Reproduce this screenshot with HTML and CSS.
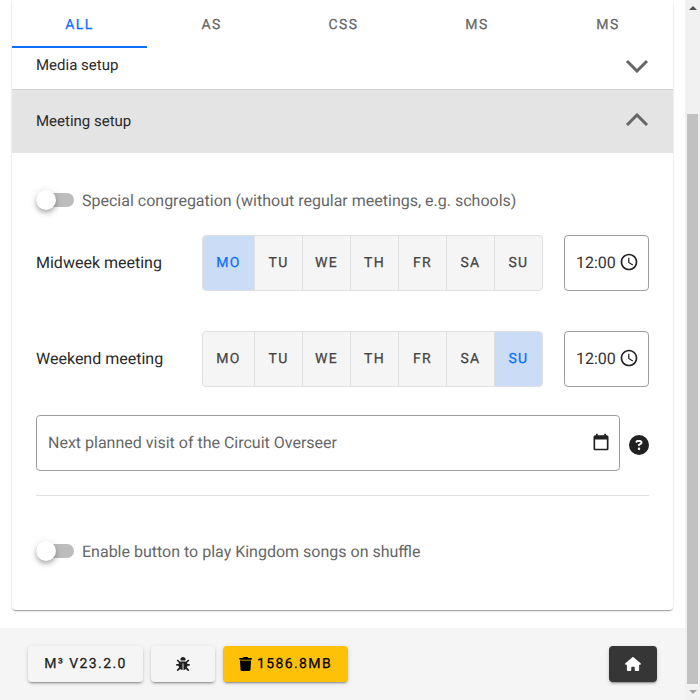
FILE: index.html
```html
<!DOCTYPE html>
<html lang="en">
<head>
  <meta charset="UTF-8">
  <meta name="viewport" content="width=device-width, initial-scale=1.0">
  <title>Meeting setup</title>
  <link rel="stylesheet" href="styles.css">
</head>
<body>
  <div class="app">
    <main class="page">
      <div class="content">
        <section class="card">
          <!-- Tabs -->
          <nav class="tabs">
            <span class="tab active">ALL</span>
            <span class="tab">AS</span>
            <span class="tab">CSS</span>
            <span class="tab">MS</span>
            <span class="tab">MS</span>
          </nav>

          <!-- Panels -->
          <div class="panel-head media">
            <span>Media setup</span>
            <svg class="chevron" viewBox="0 0 24 14"><path d="M2 2l10 10L22 2"/></svg>
          </div>
          <div class="panel-head meeting">
            <span>Meeting setup</span>
            <svg class="chevron" viewBox="0 0 24 14"><path d="M2 12L12 2l10 10"/></svg>
          </div>

          <div class="panel-body">
            <label class="switch-row special">
              <span class="switch"><span class="thumb"></span></span>
              <span>Special congregation (without regular meetings, e.g. schools)</span>
            </label>

            <div class="meeting-row midweek">
              <span class="meeting-label">Midweek meeting</span>
              <div class="days">
                <span class="day first selected">MO</span>
                <span class="day">TU</span>
                <span class="day">WE</span>
                <span class="day">TH</span>
                <span class="day">FR</span>
                <span class="day">SA</span>
                <span class="day last">SU</span>
              </div>
              <div class="time">
                <span>12:00</span>
                <svg class="clock" viewBox="0 0 24 24"><path d="M11.99 2C6.47 2 2 6.48 2 12s4.47 10 9.99 10C17.52 22 22 17.52 22 12S17.52 2 11.99 2zM12 20c-4.42 0-8-3.58-8-8s3.58-8 8-8 8 3.58 8 8-3.58 8-8 8zm.5-13H11v6l5.25 3.15.75-1.23-4.5-2.67z"/></svg>
              </div>
            </div>

            <div class="meeting-row weekend">
              <span class="meeting-label">Weekend meeting</span>
              <div class="days">
                <span class="day first">MO</span>
                <span class="day">TU</span>
                <span class="day">WE</span>
                <span class="day">TH</span>
                <span class="day">FR</span>
                <span class="day">SA</span>
                <span class="day last selected">SU</span>
              </div>
              <div class="time">
                <span>12:00</span>
                <svg class="clock" viewBox="0 0 24 24"><path d="M11.99 2C6.47 2 2 6.48 2 12s4.47 10 9.99 10C17.52 22 22 17.52 22 12S17.52 2 11.99 2zM12 20c-4.42 0-8-3.58-8-8s3.58-8 8-8 8 3.58 8 8-3.58 8-8 8zm.5-13H11v6l5.25 3.15.75-1.23-4.5-2.67z"/></svg>
              </div>
            </div>

            <div class="visit-row">
              <div class="visit-input">
                <span>Next planned visit of the Circuit Overseer</span>
                <svg class="calendar" viewBox="0 0 24 24"><path d="M19 4h-1V2h-2v2H8V2H6v2H5C3.9 4 3 4.9 3 6v14c0 1.100.9 2 2 2h14c1.100 0 2-.9 2-2V6c0-1.100-.9-2-2-2zm0 16H5V9h14v11z"/></svg>
              </div>
              <svg class="help" viewBox="0 0 512 512"><path d="M256 512A256 256 0 1 0 256 0a256 256 0 1 0 0 512zM169.8 165.3c7.900-22.300 29.100-37.300 52.800-37.300h58.300c34.900 0 63.100 28.300 63.100 63.100c0 22.600-12.100 43.500-31.700 54.800L280 264.400c-.2 13-10.900 23.600-24 23.600c-13.300 0-24-10.700-24-24V250.500c0-8.600 4.600-16.500 12.100-20.800l44.300-25.400c4.700-2.700 7.600-7.700 7.600-13.100c0-8.400-6.800-15.100-15.100-15.100H222.600c-3.400 0-6.400 2.100-7.500 5.300l-.4 1.200c-4.400 12.500-18.200 19-30.600 14.600s-19-18.200-14.600-30.600l.4-1.200zM224 352a32 32 0 1 1 64 0 32 32 0 1 1 -64 0z"/></svg>
            </div>

            <hr class="divider">

            <label class="switch-row shuffle">
              <span class="switch"><span class="thumb"></span></span>
              <span>Enable button to play Kingdom songs on shuffle</span>
            </label>
          </div>
        </section>
      </div>

      <!-- Footer -->
      <footer class="footer">
        <button class="btn version">M³ V23.2.0</button>
        <button class="btn bug">
          <svg class="bug-icon" viewBox="0 0 512 512"><path d="M256 0c53 0 96 43 96 96v3.600c0 15.700-12.700 28.400-28.400 28.400H188.400c-15.700 0-28.400-12.700-28.400-28.400V96c0-53 43-96 96-96zM41.400 105.400c12.500-12.500 32.800-12.500 45.300 0l64 64c.7 .7 1.300 1.400 1.900 2.100c14.200-7.300 30.400-11.400 47.500-11.400H312c17.100 0 33.200 4.100 47.500 11.400c.6-.7 1.200-1.400 1.900-2.100l64-64c12.500-12.500 32.800-12.500 45.300 0s12.500 32.800 0 45.300l-64 64c-.7 .7-1.400 1.300-2.100 1.900c6.200 12 10.100 25.300 11.100 39.500H480c17.700 0 32 14.300 32 32s-14.300 32-32 32H416c0 24.600-5.500 47.800-15.400 68.600c2.200 1.300 4.200 2.900 6 4.800l64 64c12.500 12.500 12.500 32.800 0 45.300s-32.800 12.500-45.300 0l-63.100-63.100c-24.500 21.800-55.800 36.200-90.300 39.600V240c0-8.800-7.200-16-16-16s-16 7.200-16 16V479.200c-34.500-3.400-65.800-17.800-90.300-39.600L86 502.600c-12.500 12.500-32.800 12.500-45.300 0s-12.500-32.800 0-45.300l64-64c1.900-1.900 3.900-3.400 6-4.800C105.500 367.800 96 344.600 96 320H32c-17.700 0-32-14.300-32-32s14.300-32 32-32H96.300c1.100-14.100 5-27.500 11.100-39.500c-.7-.6-1.400-1.200-2.100-1.900l-64-64c-12.500-12.500-12.500-32.800 0-45.300z"/></svg>
        </button>
        <button class="btn cache">
          <svg class="trash-icon" viewBox="0 0 448 512" preserveAspectRatio="none"><path d="M135.200 17.700L128 32H32C14.300 32 0 46.300 0 64S14.300 96 32 96H416c17.700 0 32-14.300 32-32s-14.300-32-32-32H320l-7.200-14.300C307.400 6.800 296.300 0 284.200 0H163.800c-12.100 0-23.200 6.800-28.600 17.700zM416 128H32L53.200 467c1.600 25.300 22.600 45 47.900 45H346.900c25.300 0 46.300-19.700 47.900-45L416 128z"/></svg>
          <span>1586.8MB</span>
        </button>
        <button class="btn home">
          <svg class="home-icon" viewBox="0 0 576 512"><path d="M575.800 255.500c0 18-15 32.100-32 32.100h-32l.7 160.200c0 2.700-.2 5.400-.5 8.100V472c0 22.100-17.900 40-40 40H456c-1.100 0-2.200 0-3.300-.1c-1.400 .1-2.800 .1-4.200 .1H416 392c-22.100 0-40-17.900-40-40V448 384c0-17.700-14.300-32-32-32H256c-17.700 0-32 14.300-32 32v64 24c0 22.100-17.900 40-40 40H160 128.100c-1.500 0-3-.1-4.500-.2c-1.200 .1-2.400 .2-3.600 .2H104c-22.100 0-40-17.900-40-40V360c0-.9 0-1.900 .1-2.800V287.600H32c-18 0-32-14-32-32.100c0-9 3-17 10-24L266.400 8c7-7 15-8 22-8s15 2 21 7L564.800 231.500c8 7 12 15 11 24z"/></svg>
        </button>
      </footer>
    </main>

    <!-- Scrollbar -->
    <div class="scrollbar">
      <span class="arrow up"></span>
      <span class="scroll-thumb"></span>
      <span class="arrow down"></span>
    </div>
  </div>
</body>
</html>
```

FILE: styles.css
```css
/* General Styles */
html, body {
  margin: 0;
  padding: 0;
  height: 700px;
  overflow: hidden;
}

body {
  font-family: Roboto, sans-serif;
  font-size: 16px;
  color: #292929;
  background-color: #fff;
  text-rendering: geometricPrecision;
}

.app {
  display: flex;
  height: 700px;
}

.page {
  width: 685px;
  display: flex;
  flex-direction: column;
}

.content {
  height: 628px;
  padding: 0 12px;
  box-sizing: border-box;
}

.card {
  height: 610px;
  background-color: #fff;
  border-radius: 0 0 4px 4px;
  box-shadow: 0 2px 1px -1px rgba(0, 0, 0, 0.2), 0 1px 1px 0 rgba(0, 0, 0, 0.14), 0 1px 3px 0 rgba(0, 0, 0, 0.12);
}

/* Tabs */
.tabs {
  display: grid;
  grid-template-columns: 135px 129px 135px 132px 130px;
  height: 48px;
}

.tab {
  display: flex;
  align-items: center;
  justify-content: center;
  font-size: 14px;
  letter-spacing: 1.4px;
  -webkit-text-stroke: 0.25px currentColor;
  color: #666;
  padding-top: 1px;
}

.tab.active {
  color: #0d6efd;
  box-shadow: inset 0 -2px 0 #0d6efd;
}

/* Panels */
.panel-head {
  display: flex;
  align-items: center;
  justify-content: space-between;
  padding: 0 24px;
  font-size: 15px;
  box-sizing: border-box;
}

.panel-head span {
  margin-top: -2px;
}

.panel-head.media {
  height: 42px;
  padding-bottom: 6px;
  border-bottom: 1px solid #cfcfcf;
}

.panel-head.meeting {
  height: 63px;
  background-color: #e4e4e4;
}

.chevron {
  width: 24px;
  height: 14px;
  fill: none;
  stroke: #666;
  stroke-width: 3;
}

.meeting .chevron {
  margin-top: -3px;
}

.panel-body {
  padding: 0 24px;
}

/* Switches */
.switch-row {
  display: flex;
  align-items: center;
  gap: 8px;
  color: #666;
}

.switch-row.special {
  margin-top: 36px;
  height: 22px;
}

.switch-row.shuffle {
  margin-top: 44px;
  height: 22px;
}

.switch {
  width: 38px;
  height: 14px;
  background-color: #bdbdbd;
  border-radius: 7px;
  display: flex;
  align-items: center;
}

.thumb {
  width: 20px;
  height: 20px;
  border-radius: 50%;
  background-color: #fff;
  box-shadow: 0 2px 4px -1px rgba(0, 0, 0, 0.2), 0 4px 5px 0 rgba(0, 0, 0, 0.14), 0 1px 10px 0 rgba(0, 0, 0, 0.12);
}

/* Meeting rows */
.meeting-row {
  display: flex;
  align-items: center;
  height: 56px;
}

.meeting-row.midweek {
  margin-top: 24px;
}

.meeting-row.weekend {
  margin-top: 40px;
}

.meeting-label {
  width: 166px;
  margin-bottom: 2px;
}

.days {
  display: flex;
  height: 56px;
  width: 341px;
  box-sizing: border-box;
  border: 1px solid #e0e0e0;
  border-radius: 4px;
  background-color: #f5f5f5;
  overflow: hidden;
}

.day {
  width: 48px;
  display: flex;
  align-items: center;
  justify-content: center;
  font-size: 14px;
  letter-spacing: 1.4px;
  -webkit-text-stroke: 0.25px currentColor;
  color: #444;
  border-right: 1px solid #e0e0e0;
  box-sizing: border-box;
}

.day.first {
  width: 52px;
}

.day.last {
  width: 47px;
  border-right: none;
}

.day.selected {
  background-color: #cbdcf6;
  color: #0d6efd;
}

.time {
  margin-left: 21px;
  width: 85px;
  height: 56px;
  box-sizing: border-box;
  border: 1px solid #9e9e9e;
  border-radius: 4px;
  display: flex;
  align-items: center;
  padding: 0 0 2px 11px;
  gap: 3px;
  color: #333;
}

.clock {
  width: 20px;
  height: 20px;
  fill: #212121;
}

/* Visit */
.visit-row {
  display: flex;
  align-items: center;
  gap: 9px;
  margin-top: 28px;
}

.visit-input {
  width: 584px;
  height: 56px;
  box-sizing: border-box;
  border: 1px solid #9e9e9e;
  border-radius: 4px;
  display: flex;
  align-items: center;
  justify-content: space-between;
  padding: 0 8px 2px 11px;
  color: #666;
}

.calendar {
  width: 20px;
  height: 20px;
  fill: #212121;
}

.help {
  width: 20px;
  height: 20px;
  margin-top: 4px;
  fill: #212121;
}

.divider {
  margin: 24px 0 0;
  border: none;
  border-top: 1px solid #e0e0e0;
}

/* Footer */
.footer {
  flex: 1;
  background-color: #f5f5f5;
  display: flex;
  align-items: flex-start;
  gap: 8px;
  padding: 18px 28px 0;
}

.btn {
  height: 36px;
  border: none;
  border-radius: 4px;
  background-color: #f5f5f5;
  color: #212121;
  font-family: Roboto, sans-serif;
  font-size: 14px;
  letter-spacing: 1.4px;
  -webkit-text-stroke: 0.25px currentColor;
  text-rendering: geometricPrecision;
  display: flex;
  align-items: center;
  justify-content: center;
  box-shadow: 0 3px 1px -2px rgba(0, 0, 0, 0.2), 0 2px 2px 0 rgba(0, 0, 0, 0.14), 0 1px 5px 0 rgba(0, 0, 0, 0.12);
}

.version {
  width: 115px;
}

.bug {
  width: 64px;
}

.bug-icon {
  width: 14px;
  height: 14px;
  fill: #212121;
}

.cache {
  width: 125px;
  background-color: #ffc107;
  color: #000;
  gap: 5px;
}

.trash-icon {
  width: 13px;
  height: 14px;
  fill: #000;
}

.home {
  width: 48px;
  margin-left: auto;
  background-color: #363636;
}

.home-icon {
  width: 16px;
  height: 14px;
  fill: #fff;
}

/* Scrollbar */
.scrollbar {
  width: 15px;
  height: 700px;
  background-color: #f1f1f1;
  display: flex;
  flex-direction: column;
  align-items: center;
  justify-content: space-between;
}

.arrow {
  width: 0;
  height: 0;
  margin: 6px 0;
  border-left: 4px solid transparent;
  border-right: 4px solid transparent;
}

.arrow.up {
  border-bottom: 4px solid #505050;
}

.arrow.down {
  border-top: 4px solid #a3a3a3;
}

.scroll-thumb {
  width: 11px;
  height: 571px;
  margin-top: 98px;
  background-color: #c1c1c1;
}
```
